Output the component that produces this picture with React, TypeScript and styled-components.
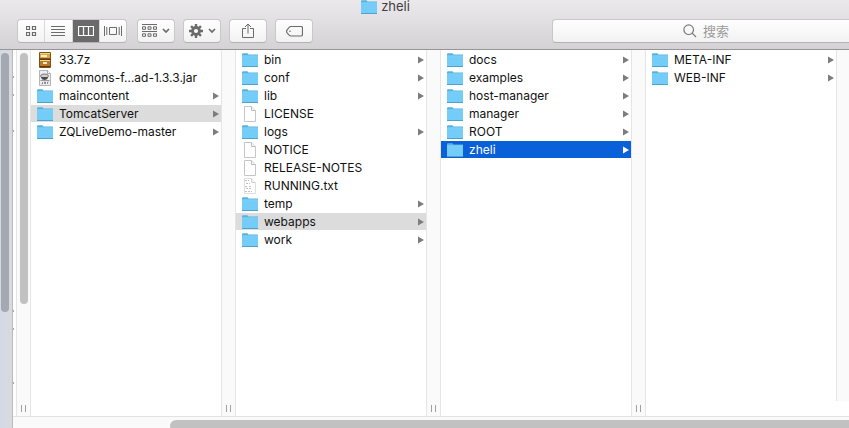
import React from "react";
import styled, { createGlobalStyle } from "styled-components";

const GlobalStyle = createGlobalStyle`
  * { box-sizing: border-box; }
  body {
    margin: 0;
    background: #fff;
    color: #111;
    font-family: Inter, "Noto Sans CJK SC", sans-serif;
    font-size: 12px;
    overflow: hidden;
  }
  button { font: inherit; color: inherit; padding: 0; margin: 0; }
  svg { display: block; flex: none; }
`;

const Window = styled.main`
  display: flex;
  flex-direction: column;
  height: 100vh;
`;

const Header = styled.header`
  flex: none;
  background: linear-gradient(#ebe9eb, #d4d2d4);
  border-bottom: 1px solid #969496;
`;

const TitleBar = styled.div`
  display: flex;
  justify-content: center;
  align-items: center;
  gap: 4px;
  height: 13px;
  margin-bottom: 6px;
  padding-right: 78px;
`;

const Title = styled.h1`
  margin: 0;
  font-size: 13px;
  font-weight: 400;
  line-height: 13px;
  color: #403e40;
`;

const Toolbar = styled.div`
  display: flex;
  gap: 8px;
  padding: 0 0 6px 17px;
`;

const controlFace = `
  height: 24px;
  background: linear-gradient(#fefefe, #f2f2f2);
  border: 1px solid #c9c7c9;
  border-bottom-color: #b3b1b3;
  border-radius: 4px;
`;

const Segments = styled.div`
  ${controlFace}
  display: flex;
  width: 110px;
  margin-right: 2px;
  overflow: hidden;
`;

const Segment = styled.button<{ $active?: boolean }>`
  flex: 1;
  display: flex;
  align-items: center;
  justify-content: center;
  border: 0;
  border-left: 1px solid #d8d8d8;
  background: ${(p) => (p.$active ? "#6b6a6b" : "transparent")};
  color: ${(p) => (p.$active ? "#fff" : "#6b6b6b")};
  &:first-child { border-left: 0; }
`;

const ToolButton = styled.button`
  ${controlFace}
  display: flex;
  align-items: center;
  justify-content: center;
  gap: 5px;
  width: 38px;
  color: #6b6b6b;
`;

const Spacer = styled.div`
  flex: 223;
`;

const SearchField = styled.label`
  ${controlFace}
  flex: 297;
  display: flex;
  align-items: center;
  gap: 6px;
  border-right: 0;
  border-radius: 4px 0 0 4px;
  color: #7b7b7b;
  & > svg { margin-left: 44%; }
`;

const SearchInput = styled.input`
  flex: 1;
  min-width: 0;
  padding: 0;
  border: 0;
  outline: 0;
  background: transparent;
  font: inherit;
  font-size: 13px;
  &::placeholder { color: #9b9b9b; opacity: 1; }
`;

const Body = styled.div`
  flex: 1;
  display: flex;
  min-height: 0;
`;

const Backdrop = styled.div`
  flex: none;
  width: 13px;
  padding: 3px 0 0 1px;
  background: linear-gradient(90deg, #d3d9e5, #d9dade);
  border-right: 1px solid #b9bac1;
`;

const Browser = styled.section`
  flex: 1;
  display: flex;
  flex-direction: column;
  min-width: 0;
`;

const Panes = styled.div`
  flex: 1;
  display: flex;
  min-height: 0;
  overflow: hidden;
`;

const PreviousPane = styled.div`
  flex: none;
  display: flex;
  flex-direction: column;
  gap: 16px;
  width: 3px;
  padding-top: 26px;
`;

const Fragment = styled.i<{ $shown: boolean }>`
  flex: none;
  width: 1px;
  height: 2px;
  background: ${(p) => (p.$shown ? "#a8a8a8" : "transparent")};
`;

const Gutter = styled.div<{ $last?: boolean }>`
  flex: none;
  display: flex;
  flex-direction: column;
  align-items: center;
  justify-content: space-between;
  width: 15px;
  padding: 3px 0 4px;
  margin-bottom: ${(p) => (p.$last ? "15px" : "0")};
  background: #fafafa;
  border: solid #e5e5e5;
  border-width: 0 1px;
`;

const Thumb = styled.div<{ $length: string; $tone: string }>`
  width: 8px;
  height: ${(p) => p.$length};
  border-radius: 4px;
  background: ${(p) => p.$tone};
`;

const Grip = styled.div`
  width: 5px;
  height: 7px;
  margin-top: auto;
  border: solid #a0a0a0;
  border-width: 0 1px;
`;

const Pane = styled.ul`
  flex: none;
  display: flex;
  flex-direction: column;
  gap: 1px;
  width: 190px;
  margin: 0;
  padding: 1px 0 0;
  list-style: none;
`;

const Row = styled.button<{ $state?: "path" | "selected" }>`
  display: flex;
  align-items: center;
  width: 100%;
  height: 17px;
  padding: 0 2px 0 6px;
  border: 0;
  text-align: left;
  background: ${(p) =>
    p.$state === "selected" ? "#0a60d8" : p.$state === "path" ? "#dcdcdc" : "transparent"};
  color: ${(p) => (p.$state === "selected" ? "#fff" : "inherit")};
`;

const Name = styled.span`
  flex: 1;
  margin-left: 6px;
  line-height: 17px;
  white-space: nowrap;
`;

const Arrow = styled.svg<{ $light: boolean }>`
  fill: ${(p) => (p.$light ? "#fff" : "#7d7d7d")};
`;

const ScrollTrack = styled.div`
  flex: none;
  height: 12px;
  padding: 3px 0 0 157px;
  background: #fafafa;
  border-top: 1px solid #e2e2e2;
  overflow: hidden;
`;

const ScrollThumb = styled.div`
  height: 12px;
  border-radius: 6px 0 0 6px;
  background: #c1c1c1;
`;

type Kind = "folder" | "file" | "text" | "zip" | "jar";

const FolderIcon = () => (
  <svg width="16" height="16" viewBox="0 0 16 16">
    <path d="M0 3V2l.7-.7h4.800L6.500 2.500H16V15H0z" fill="#55b3df" />
    <path d="M0 4.500h16V14H0z" fill="#74cdf8" />
    <path d="M0 4h16" stroke="#8edaff" />
    <path d="M0 14.500h16" stroke="#4ea3ca" />
  </svg>
);

const FileIcon = ({ lines }: { lines?: boolean }) => (
  <svg width="16" height="16" viewBox="0 0 16 16">
    <path d="M2.500.5h7l4 4v11h-11z" fill="#fff" stroke={lines ? "#dedede" : "#c6c6c6"} />
    <path d="M9.500.5v4h4" fill="#f5f5f5" stroke={lines ? "#d0d0d0" : "#bdbdbd"} />
    {lines && (
      <path d="M3 2.500h4M4 5.500h4M3 8.500h3M7 8.500h3M4 10.500h5M3 13.500h2M6 13.500h4" stroke="#c2c2c2" strokeDasharray="2 1" />
    )}
  </svg>
);

const ZipIcon = () => (
  <svg width="16" height="16" viewBox="0 0 16 16">
    <rect x="2" y="0" width="12" height="16" rx="1" fill="#80501b" />
    <path d="M3 1h10v5H3z" fill="#dca644" />
    <path d="M3 9h10v5H3z" fill="#b97929" />
    <path d="M3 1.500h10M3 8.500h10" stroke="#f4d486" />
    <path d="M4 3h6v2H4z" fill="#fff2c4" />
    <path d="M2 7.500h12" stroke="#633b13" />
    <path d="M6 10h4v2H6z" fill="#f8ebc6" />
    <path d="M3 14.500h10" stroke="#5c3511" />
  </svg>
);

const JarIcon = () => (
  <svg width="16" height="16" viewBox="0 0 16 16">
    <path d="M2.500.5h8l3 3v12h-11z" fill="#eee" stroke="#b5b5b5" />
    <path d="M10.500.5v3h3" fill="#fff" stroke="#aaa" />
    <ellipse cx="7.500" cy="6" rx="4" ry="2" fill="#d0d0d0" stroke="#777" />
    <path d="M4 7c0 4 7 4 7 0" fill="#4d4d4d" />
    <path d="M3.500 10.500h9" stroke="#999" />
    <path d="M5.500 12v2h-1M7.500 14v-2h1v2M10.500 14v-2h1" fill="none" stroke="#777" strokeWidth=".8" />
  </svg>
);

const ItemIcon = ({ kind }: { kind: Kind }) => {
  if (kind === "folder") return <FolderIcon />;
  if (kind === "zip") return <ZipIcon />;
  if (kind === "jar") return <JarIcon />;
  return <FileIcon lines={kind === "text"} />;
};

const Chevron = () => (
  <svg width="8" height="6" viewBox="0 0 8 6" fill="none" stroke="currentColor" strokeWidth="1.700">
    <path d="M1 1l3 3 3-3" />
  </svg>
);

const GridIcon = () => (
  <svg width="11" height="11" viewBox="0 0 11 11" fill="none" stroke="currentColor">
    <path d="M.5.5h3v3h-3zM6.500.5h3v3h-3zM.5 6.500h3v3h-3zM6.500 6.500h3v3h-3z" strokeWidth="1.200" />
  </svg>
);

const ListIcon = () => (
  <svg width="14" height="11" viewBox="0 0 14 11" stroke="currentColor">
    <path d="M0 .5h14M0 3.500h14M0 6.500h14M0 9.500h14" />
  </svg>
);

const ColumnsIcon = () => (
  <svg width="16" height="11" viewBox="0 0 16 11" fill="none" stroke="currentColor">
    <path d="M.5.5h15v9H.5zM5.500.5v9M10.500.5v9" strokeWidth="1.200" />
  </svg>
);

const CoverFlowIcon = () => (
  <svg width="18" height="11" viewBox="0 0 18 11" fill="none" stroke="currentColor">
    <path d="M.5 0v10M2.800 1v8M17.500 0v10M15.200 1v8M5.500 1.500h7v7h-7z" />
  </svg>
);

const ArrangeIcon = () => (
  <svg width="15" height="14" viewBox="0 0 15 14" fill="none" stroke="currentColor">
    <path d="M0 .5h15M0 7.500h15M.5 2.800h3v2.500h-3zM6 2.800h3v2.500H6zM11.500 2.800h3v2.500h-3zM.5 9.800h3v2.500h-3zM6 9.800h3v2.500H6zM11.500 9.800h3v2.500h-3z" />
  </svg>
);

const GearIcon = () => (
  <svg width="14" height="14" viewBox="0 0 14 14" fill="none" stroke="currentColor">
    <circle cx="7" cy="7" r="3.500" strokeWidth="2.800" />
    <path
      d="M7 0v3M7 11v3M0 7h3M11 7h3M2.050 2.050l2.200 2.200M9.750 9.750l2.200 2.200M2.050 11.950l2.200-2.200M9.750 4.250l2.200-2.200"
      strokeWidth="2.400"
    />
  </svg>
);

const ShareIcon = () => (
  <svg width="12" height="16" viewBox="0 0 12 16" fill="none" stroke="currentColor">
    <path d="M4 5.500H.5v9h11v-9H8M6 1v9.500M3 4l3-3 3 3" />
  </svg>
);

const TagIcon = () => (
  <svg width="17" height="11" viewBox="0 0 17 11" fill="none" stroke="currentColor">
    <path d="M5 .5h10q1.500 0 1.500 1.500v6.500Q16.500 10 15 10H5Q3.800 10 3 9L.8 6.300q-.6-1 0-2L3 1.500Q3.800.5 5 .5z" strokeWidth="1.200" />
    <circle cx="4" cy="5.300" r=".8" fill="currentColor" stroke="none" />
  </svg>
);

const SearchIcon = () => (
  <svg width="14" height="14" viewBox="0 0 14 14" fill="none" stroke="currentColor" strokeWidth="1.200">
    <circle cx="5.700" cy="5.700" r="4.800" />
    <path d="M9.200 9.200L13 13" />
  </svg>
);

interface Item {
  name: string;
  kind?: Kind;
  state?: "path" | "selected";
}

const columns: Item[][] = [
  [
    { name: "33.7z", kind: "zip" },
    { name: "commons-f…ad-1.3.3.jar", kind: "jar" },
    { name: "maincontent" },
    { name: "TomcatServer", state: "path" },
    { name: "ZQLiveDemo-master" },
  ],
  [
    { name: "bin" },
    { name: "conf" },
    { name: "lib" },
    { name: "LICENSE", kind: "file" },
    { name: "logs" },
    { name: "NOTICE", kind: "file" },
    { name: "RELEASE-NOTES", kind: "file" },
    { name: "RUNNING.txt", kind: "text" },
    { name: "temp" },
    { name: "webapps", state: "path" },
    { name: "work" },
  ],
  [
    { name: "docs" },
    { name: "examples" },
    { name: "host-manager" },
    { name: "manager" },
    { name: "ROOT" },
    { name: "zheli", state: "selected" },
  ],
  [{ name: "META-INF" }, { name: "WEB-INF" }],
];

const previousRowCount = 18;
const rowsWithFragment = [0, 1, 3, 13, 14, 17];

const Column = ({ items }: { items: Item[] }) => (
  <Pane>
    {items.map(({ name, kind = "folder", state }) => (
      <li key={name}>
        <Row $state={state}>
          <ItemIcon kind={kind} />
          <Name>{name}</Name>
          {kind === "folder" && (
            <Arrow $light={state === "selected"} width="6" height="8" viewBox="0 0 6 8">
              <path d="M0 .5l6 3.500-6 3.500z" />
            </Arrow>
          )}
        </Row>
      </li>
    ))}
  </Pane>
);

export default function App() {
  return (
    <Window>
      <GlobalStyle />
      <Header>
        <TitleBar>
          <FolderIcon />
          <Title>zheli</Title>
        </TitleBar>
        <Toolbar>
          <Segments role="group" aria-label="View">
            <Segment aria-label="Icons"><GridIcon /></Segment>
            <Segment aria-label="List"><ListIcon /></Segment>
            <Segment aria-label="Columns" aria-pressed="true" $active><ColumnsIcon /></Segment>
            <Segment aria-label="Cover Flow"><CoverFlowIcon /></Segment>
          </Segments>
          <ToolButton aria-label="Arrange"><ArrangeIcon /><Chevron /></ToolButton>
          <ToolButton aria-label="Actions"><GearIcon /><Chevron /></ToolButton>
          <ToolButton aria-label="Share"><ShareIcon /></ToolButton>
          <ToolButton aria-label="Tags"><TagIcon /></ToolButton>
          <Spacer />
          <SearchField>
            <SearchIcon />
            <SearchInput type="text" placeholder="搜索" aria-label="搜索" />
          </SearchField>
        </Toolbar>
      </Header>
      <Body>
        <Backdrop>
          <Thumb $length="69%" $tone="#a4a8b0" />
        </Backdrop>
        <Browser>
          <Panes>
            <PreviousPane>
              {Array.from({ length: previousRowCount }, (_, i) => (
                <Fragment key={i} $shown={rowsWithFragment.includes(i)} />
              ))}
            </PreviousPane>
            <Gutter>
              <Thumb $length="70%" $tone="#c1c1c1" />
              <Grip />
            </Gutter>
            {columns.map((items, i) => (
              <React.Fragment key={i}>
                <Column items={items} />
                <Gutter $last={i === columns.length - 1}>
                  {i < columns.length - 1 && <Grip />}
                </Gutter>
              </React.Fragment>
            ))}
          </Panes>
          <ScrollTrack>
            <ScrollThumb />
          </ScrollTrack>
        </Browser>
      </Body>
    </Window>
  );
}
